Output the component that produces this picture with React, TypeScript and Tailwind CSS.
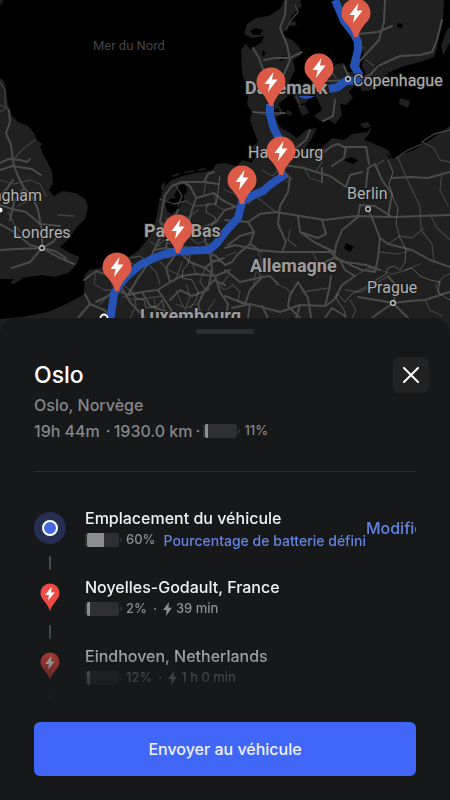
import type { ReactNode } from 'react'

const LAND = [
  'M0 78 4 81 6 90 8 104 12 116 18 122 28 126 34 133 37 140 42 144 40 147 43 154 48 163 52 172 53 183 49 190 54 196 63 191 76 193 85 199 88 207 85 219 76 228 70 238 60 247 70 253 79 257 77 264 68 273 55 277 42 275 28 277 14 279 0 279Z',
  'M0 0H3L2 4 0 5Z',
  'M10 283 16 277 22 279 14 284Z',
  'M0 334V319L22 317 48 312 62 306 74 300 84 294 85 275 89 270 101 268 113 263 128 257 138 251 150 236 156 219 160 199 164 187 172 180 182 176 196 173 204 172 212 170 216 164 224 163 236 166 243 160 251 163 256 156 252 147 258 142 254 131 250 120 252 112 247 104 249 91 242 74 241 50 246 43 250 50 262 42 264 36 252 38 244 34 247 24 256 18 268 16 280 9 284 0H300L302 6 291 16 288 26 281 35 292 40 300 48 301 55 293 60 295 70 288 84 287 97 278 104 283 112 276 118 280 127 290 133 297 138 306 130 317 128 312 138 304 150 311 153 323 147 332 138 344 140 352 134 367 132 372 127 369 134 364 140 370 142 388 150 393 159 403 154 414 150 430 140 450 126V334Z',
  'M335 0 343 6 348 18 352 30 359 44 364 56 362 66 366 74 358 82 362 91 371 90 380 80 390 72 404 66 420 62 434 57 437 48 438 34 443 21 444 0Z',
  'M295 92 304 90 310 95 306 103 299 104 294 98Z',
  'M316 86 320 74 329 72 336 64 344 63 346 72 355 72 356 84 349 92 353 98 346 105 340 104 342 115 335 124 328 119 320 121 314 116 322 110 318 100 314 95Z',
  'M298 106 305 105 309 113 302 116Z',
  'M288 22 295 21 297 25 290 26Z',
  'M400 98 410 101 408 108 399 104Z',
  'M441 46 446 32 450 26V42L443 56Z',
  'M161 186 164 181 165 188 161 191Z',
  'M172 175 180 173 179 175 173 177ZM184 172 195 170 193 172 185 173ZM198 169 207 168 206 170 199 171Z',
  'M287 110 292 112 291 116 286 114ZM360 124 368 122 371 127 364 128Z',
]

const WATER = [
  'M165 204 170 199 178 197 183 190 184 200 178 209 171 214 167 211Z',
  'M174 196 180 185 186 184 187 192 180 199Z',
  'M398 23 403 24 402 28 397 27Z',
  'M303 32 308 29 313 36 306 38Z',
  'M250 31 256 28 263 30 260 35 253 35Z',
  'M262 50 266 53 263 57ZM279 58 284 56 286 59 280 61ZM273 110 278 108 280 113 275 114Z',
  'M374 67 379 63 380 67 376 69ZM345 26 350 24 350 28Z',
  'M343 160 352 157 358 160 353 164Z',
  'M346 243 354 247 350 252 344 248Z',
  'M352 262 357 265 355 268 351 266ZM387 154 392 157 389 158Z',
]

const MAJOR_ROADS = [
  'M9 110 10 122 6 133 11 145 13 160 14 166 18 176 24 188 33 198 38 210 42 232 42 248',
  'M0 163 8 159 20 160 27 162 30 159M0 170 12 166 32 169 41 175',
  'M0 205 12 209 26 212 40 224 60 226M0 224 14 232 30 245 42 248 58 257 74 264M0 250 16 249 42 248 30 262 12 268',
  'M42 248 53 242 62 230M42 248 55 251 66 258M13 180 6 190 0 196M24 188 14 202 10 220',
  'M286 0 285 15 280 28 287 45 290 60 284 74 275 82M253 48 259 58 264 72 270 85M264 60 275 58 290 58 302 52',
  'M385 0 384 22 379 40 368 52 359 62 357 78M358 80 370 75 378 66 391 60 400 56 420 55 432 52 437 40 442 20M357 34 378 32 392 26',
  'M319 80 330 81 348 80M335 100 333 116 323 121M350 80 344 66',
  'M281 165 290 166 304 168 316 172 330 176 346 187M281 168 290 178 288 192 280 206 278 224 286 242 282 252M322 182 322 168',
  'M281 150 296 148 306 140 310 130M282 180 264 190 248 203',
  'M324 152 332 146 338 144 344 147 366 147 369 164M346 147 344 158 332 166',
  'M225 220 248 222 260 214 276 212 300 216 325 220 355 216 392 217 420 216 450 215',
  'M346 187 350 175 362 172M392 217 375 206 360 205 358 217 342 230 336 245 334 258 325 262M368 209 372 218 380 238 388 244 412 250 430 260 450 267',
  'M380 238 378 258 375 272 362 270 340 260 330 252 312 252 280 252 258 250 235 245 225 248',
  'M366 187 368 168 375 164 382 180 392 194 388 217M392 178 410 177 428 178 450 172',
  'M340 260 345 270 355 276 342 285 334 300 325 306 300 305 280 312 250 304 232 308',
  'M334 258 345 262 366 265 380 270M278 284 270 276 262 277 250 290 245 304 225 296M262 277 240 282 225 270',
  'M298 282 290 295 288 306 300 318M298 282 308 298 311 318M325 306 329 290 331 276',
  'M84 280 96 271 108 275 120 285M85 294 90 304 78 318M90 304 104 310 112 316M120 285 108 296 96 302M120 285 130 302 145 318',
  'M117 290 128 295 142 292 158 290 170 282 182 276 196 274 215 276M142 292 150 306 168 312 184 318M158 290 166 302 176 318',
  'M128 295 138 278 148 264 154 250 160 238 170 228 178 210M154 250 166 248 178 251 190 262 205 268 215 276 230 270',
  'M166 248 168 235 160 222 163 206 165 195 172 186 182 182 190 186 196 198 192 210 188 225 178 240',
  'M182 182 204 182 218 184M196 198 214 193 222 200 238 208M188 225 202 228 216 222 225 210 242 205M202 228 206 244 210 252 212 270 208 290',
  'M225 265 216 256 206 252M225 285 214 280 205 290 198 304 202 318M215 276 220 292 228 304 226 318M208 290 192 296 180 290 170 300',
  'M248 222 254 232 250 244 238 254 232 262 225 265M250 244 262 252M254 232 240 236 228 245',
  'M298 216 300 232 314 242 334 252M300 232 318 238 326 234 322 220',
  'M393 303 380 312 372 318M393 303 408 318M393 303 410 301 425 300 440 295 450 292M393 303 376 300 358 297M393 303 398 288 388 276',
  'M325 318 332 308 345 316M250 304 248 318M262 306 268 318M300 305 296 318',
  'M204 182 208 174 214 172M160 222 170 228 188 225M205 268 212 262 224 258M170 282 166 268 178 251',
]

const MINOR_ROADS = [
  'M0 82 5 90 5 104 8 110M0 105 7 108 0 112M15 158 24 148 35 140',
  'M0 180 14 184 30 180 40 184M40 184 46 196M8 212 14 224 24 236M30 200 18 206M58 215 74 216',
  'M295 5 298 12 291 20 286 30M253 112 270 115 285 113M296 96 300 106M330 70 336 78M356 44 364 48M366 60 374 66',
  'M318 150 322 162 316 172M398 158 404 172 412 190 420 206 421 230 432 244 434 262',
  'M422 144 408 150 396 158M422 142 434 148 440 160 450 162M422 142 434 134 450 130',
  'M430 214 437 228 450 240M442 172 440 190 448 206M375 166 384 160M412 250 398 254 380 252',
  'M160 199 174 204 186 201 194 206 210 205M176 186 182 196 178 206M206 180 204 194M214 193 216 206 225 210',
  'M165 218 176 222 190 216 198 210M182 262 178 274 174 282M196 274 192 262M160 262 168 270 182 276M205 268 200 282 206 290',
  'M148 264 156 272 160 284M134 292 136 306 130 318M154 298 156 312M176 290 182 304 190 318M206 244 218 246M212 260 222 262',
  'M96 271 94 284 104 290 117 290M100 304 108 296M215 300 208 310 212 318',
  'M225 190 240 196M258 198 268 206 276 212M262 170 272 176 281 168M292 178 286 182M304 168 310 178 322 182',
  'M258 250 262 264 258 272 262 277M236 252 226 256M290 230 288 240 296 246M312 252 318 262 330 266',
  'M276 284 286 288 292 294M232 284 240 292 238 300 248 304M254 284 256 272M302 292 315 290 330 288',
  'M355 276 368 268 380 270 392 274 406 270 420 264M345 290 360 292 372 286 388 276M350 300 356 310 352 318',
  'M425 300 430 310 442 316M440 295 436 286 444 276 450 274M388 244 400 236 412 238 424 228',
  'M150 242 158 246 164 240 170 244M158 232 164 228 170 236M190 238 198 244 206 240M184 246 194 250 204 246M128 262 138 266 148 258',
  'M122 296 134 300 148 298 162 296M186 284 190 296 186 308M196 304 186 308 176 304M218 284 224 290 232 286M228 276 222 284',
]

const BORDERS = [
  'M388 160 393 172 389 184 394 200 398 208 396 224 400 238 406 250 405 262 400 270 394 266 388 268 386 274 376 280 368 286 360 290 352 294 345 302 338 294 336 298 344 310 346 318',
  'M405 270 412 268 420 276 430 280 440 282 438 292 446 298 450 300',
  'M220 176 218 192 216 204 207 204 206 212 216 218 212 226M182 246 190 256 188 264 183 270 182 278 192 280 198 292 196 300 190 308M130 258 140 256 148 262 158 256 168 258 178 252 188 256',
  'M122 284 130 290 136 298 144 300 146 308 158 306 162 300 164 308M253 112 285 113',
]

const ROUTES = [
  'M110 322 112 308 114 294 119 285 127 276 140 265 152 259 165 254 178 251 209 250 216 244 226 231 238 218 241 206 243 200 256 194 263 191 271 184 286 174',
  'M281 165V142L274 129 270 115V104',
  'M329 89 338 87 346 81 358 80 359 74 354 66 358 50V42L354 34 344 21 335 0',
]

const PINS = [
  [356, 36],
  [319, 91],
  [271, 105],
  [281, 174],
  [242, 203],
  [178, 252],
  [117, 290],
]

const CITIES = [
  { x: 348, y: 79 },
  { x: 42, y: 248 },
  { x: 368, y: 209 },
  { x: 393, y: 303 },
]

type Stop = {
  name: string
  battery: number
  charge?: string
  note?: string
}

const STOPS: Stop[] = [
  { name: 'Emplacement du véhicule', battery: 60, note: 'Pourcentage de batterie défini' },
  { name: 'Noyelles-Godault, France', battery: 2, charge: '39 min' },
  { name: 'Eindhoven, Netherlands', battery: 12, charge: '1 h 0 min' },
]

function MapPin({ x, y }: { x: number; y: number }) {
  return (
    <g transform={`translate(${x} ${y})`}>
      <path
        d="M-2 1C-2.500-3-5-7-9-12-12-15-14.500-18-14.500-23A14.500 14.500 0 0 1 14.500-23C14.500-18 12-15 9-12 5-7 2.500-3 2 1Z"
        fill="#dc5b47"
      />
      <path d="M2.500-33-6.500-21H-1.500L-3-13 6.500-25.500H1Z" fill="#fff" />
    </g>
  )
}

function RouteMap() {
  return (
    <svg
      className="w-full bg-black"
      viewBox="0 0 450 334"
      preserveAspectRatio="xMidYMin slice"
      role="img"
      aria-label="Carte de l'itinéraire"
    >
      <g fill="#202020">
        {LAND.map((d) => <path key={d} d={d} />)}
      </g>
      <g fill="#000">
        {WATER.map((d) => <path key={d} d={d} />)}
      </g>
      <g fill="none" strokeLinejoin="round" strokeLinecap="round">
        <g stroke="#414341" strokeWidth="1.3">
          {MINOR_ROADS.map((d) => <path key={d} d={d} />)}
        </g>
        <g stroke="#4a4c4a" strokeWidth="2">
          {MAJOR_ROADS.map((d) => <path key={d} d={d} />)}
        </g>
        <g stroke="#808080" strokeWidth="0.6">
          {BORDERS.map((d) => <path key={d} d={d} />)}
        </g>
      </g>
      <g fill="none" stroke="#2552b5" strokeWidth="8" strokeLinejoin="round">
        {ROUTES.map((d) => <path key={d} d={d} />)}
      </g>
      <path d="M298 96Q306 102 315 96Z" fill="#2552b5" />

      {CITIES.map((c) => (
        <circle key={c.x} cx={c.x} cy={c.y} r="2.300" fill="#111" stroke="#d5d5d5" strokeWidth="1.200" />
      ))}
      <circle cx="0" cy="210" r="2.500" fill="#eee" />
      <circle cx="104" cy="318" r="3.500" fill="#222" stroke="#fff" strokeWidth="1.800" />

      <text x="93" y="50" className="fill-[#454545] font-[Roboto,sans-serif] text-[13px]">Mer du Nord</text>
      <g
        className="fill-[#b2b2b2] font-[Roboto,sans-serif] text-[16px]"
        stroke="#1a1a1a"
        strokeWidth="2"
        strokeLinejoin="round"
        paintOrder="stroke"
      >
        <text x="353" y="86">Copenhague</text>
        <text x="248" y="158">Hambourg</text>
        <text x="347" y="199">Berlin</text>
        <text x="367" y="293">Prague</text>
        <text x="13" y="238">Londres</text>
        <text x="42" y="201" textAnchor="end">Birmingham</text>
      </g>
      <g
        className="fill-[#9c9c9c] font-[Roboto,sans-serif] text-[18px] font-bold"
        stroke="#1a1a1a"
        strokeWidth="2"
        strokeLinejoin="round"
        paintOrder="stroke"
      >
        <text x="245" y="94">Danemark</text>
        <text x="144" y="237">Pays-Bas</text>
        <text x="250" y="272">Allemagne</text>
        <text x="140" y="322">Luxembourg</text>
      </g>

      {PINS.map(([x, y]) => <MapPin key={x} x={x} y={y} />)}
    </svg>
  )
}

function Battery({ level }: { level: number }) {
  return (
    <svg className="shrink-0" width="37" height="14" viewBox="0 0 37 14" aria-hidden="true">
      <rect width="34" height="14" rx="3" fill="#2e2e34" />
      <path d={`M4 0H${Math.max(5, Math.round(2 + level * 0.29))}V14H4Q2 14 2 12V2Q2 0 4 0Z`} fill="#8e8e90" />
      <path d="M35.500 4.500Q37 5 37 7T35.500 9.500Z" fill="#38383c" />
    </svg>
  )
}

function Bolt() {
  return (
    <svg width="9" height="14" viewBox="0 0 9 14" fill="currentColor" aria-hidden="true">
      <path d="M6 0 0 8H3.500L3 14 9 5.800H5.500Z" />
    </svg>
  )
}

function StopPin() {
  return (
    <svg width="20" height="28" viewBox="0 0 20 28" aria-hidden="true">
      <path d="M10 28C8.500 23 5.500 20 3 16.500 1.500 14.500.5 12.500.5 10A9.500 9.500 0 0 1 19.500 10C19.500 12.500 18.500 14.500 17 16.500 14.500 20 11.500 23 10 28Z" fill="#ef4b45" />
      <path d="M11.500 4 5 12H8.800L8.200 17.500 14.800 9.500H11Z" fill="#fff" />
    </svg>
  )
}

function StartDot() {
  return (
    <span className="flex size-8 items-center justify-center rounded-full bg-[#242f53]">
      <span className="size-4 rounded-full border-2 border-white bg-[#4468e2]" />
    </span>
  )
}

function StopRow({ stop, marker, children }: { stop: Stop; marker: ReactNode; children?: ReactNode }) {
  return (
    <li className="flex overflow-hidden">
      <div className="mr-[19px] flex w-8 shrink-0 flex-col items-center">
        <div className="flex h-11 items-center">{marker}</div>
        <span className="mt-[6px] mb-[5px] h-[14px] w-[2px] rounded-full bg-[#48494b]" />
      </div>
      <div className="shrink-0">
        <h2 className="text-[16px] leading-6 font-medium text-[#f0f0f0]">{stop.name}</h2>
        <p className="flex h-5 items-center gap-1 text-[13px] font-medium text-[#8d8e90]">
          <Battery level={stop.battery} />
          <span>{stop.battery}%</span>
          {stop.charge && (
            <>
              <span className="px-0.5">·</span>
              <Bolt />
              <span>{stop.charge}</span>
            </>
          )}
          {stop.note && <span className="pl-1 text-[14px] text-[#6584e2]">{stop.note}</span>}
        </p>
      </div>
      {children}
    </li>
  )
}

export default function App() {
  return (
    <div className="flex min-h-screen flex-col bg-black font-[Inter,'Liberation_Sans',sans-serif]">
      <div className="flex flex-1">
        <RouteMap />
      </div>

      <main className="relative -mt-4 rounded-t-2xl bg-[#17181a] px-[34px] pt-[11px] pb-6">
        <div className="mx-auto h-[5px] w-[58px] rounded-full bg-[#2e2e2f]" />

        <header className="mt-[23px]">
          <div className="-mr-[13px] flex items-center justify-between">
            <h1 className="text-[23px] leading-9 font-medium text-white">Oslo</h1>
            <button type="button" aria-label="Fermer" className="flex size-9 items-center justify-center rounded-md bg-[#222222] text-white">
              <svg width="16" height="16" viewBox="0 0 16 16" fill="none" stroke="currentColor" strokeWidth="2" strokeLinecap="round" aria-hidden="true">
                <path d="m1 1 14 14M15 1 1 15" />
              </svg>
            </button>
          </div>
          <p className="text-[16px] leading-6 font-medium text-[#858688]">Oslo, Norvège</p>
          <p className="flex h-7 items-center gap-[3px] text-[16px] font-medium whitespace-nowrap text-[#858688]">
            <span>19h 44m</span>
            <span className="pl-[3px]">·</span>
            <span>1930.0 km</span>
            <span>·</span>
            <Battery level={11} />
            <span className="pl-px text-[13px]">11%</span>
          </p>
        </header>

        <hr className="mt-[26px] border-[#2c2d2f]" />

        <ol className="mt-[34px] [mask-image:linear-gradient(to_bottom,black_58%,transparent_96%)]">
          <StopRow stop={STOPS[0]} marker={<StartDot />}>
            <button type="button" className="h-11 shrink-0 text-[16px] font-medium text-[#6584e2]">Modifier</button>
          </StopRow>
          <StopRow stop={STOPS[1]} marker={<StopPin />} />
          <StopRow stop={STOPS[2]} marker={<StopPin />} />
        </ol>

        <button type="button" className="mt-[9px] h-[54px] w-full rounded-md bg-[#4067f8] text-[16px] font-medium text-[#f0f2ff]">
          Envoyer au véhicule
        </button>
      </main>
    </div>
  )
}
